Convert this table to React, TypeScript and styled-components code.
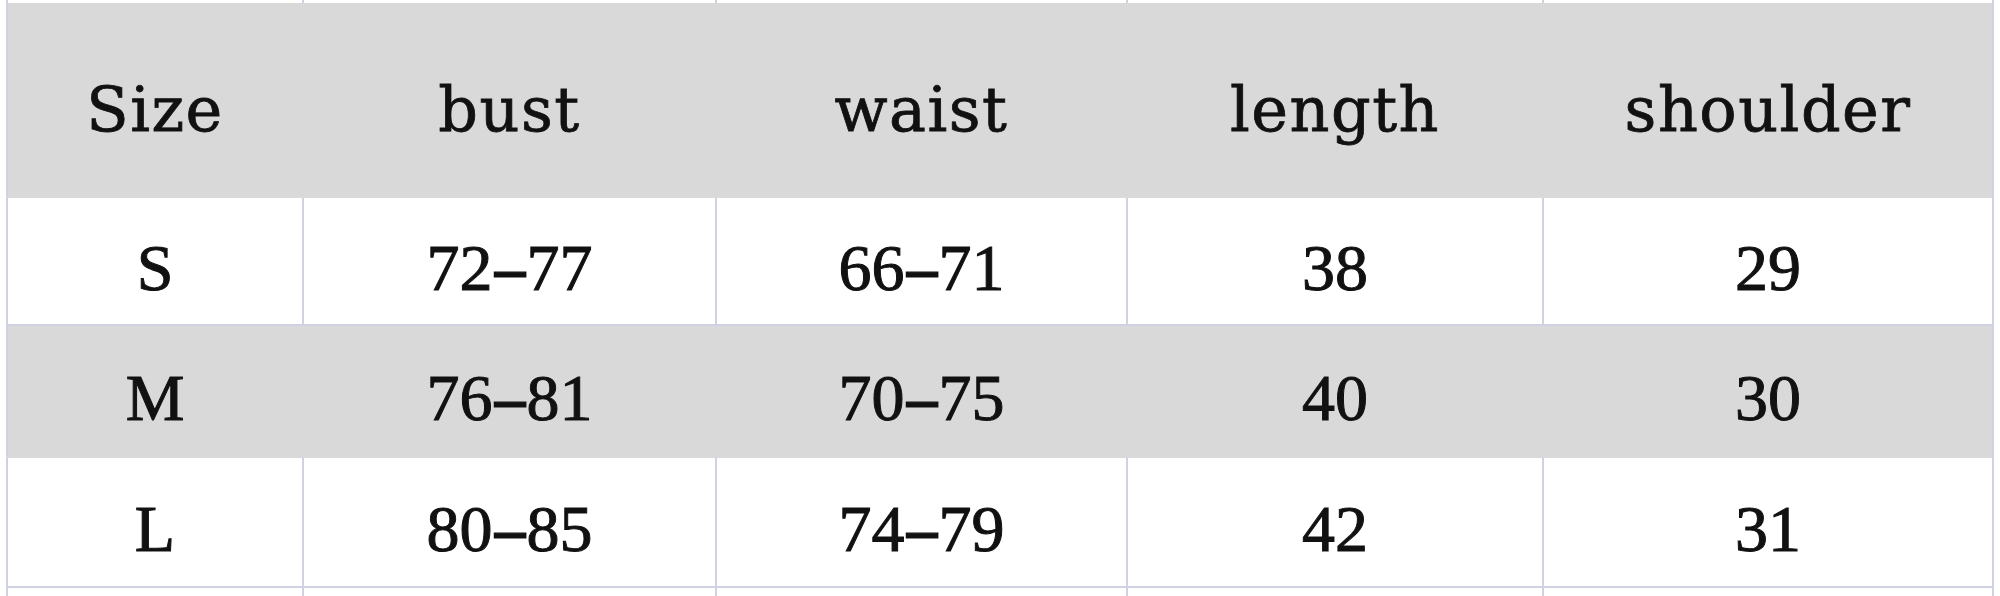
import styled, { createGlobalStyle } from 'styled-components';

const GlobalStyle = createGlobalStyle`
  html, body {
    margin: 0;
    padding: 0;
    background: #ffffff;
  }
`;

const LINE = '#cfd2e2';
const SHADE = '#d9d9d9';
const COLS = '296px 413px 411px 416px 450px';

type Size = { size: string; bust: string; waist: string; length: string; shoulder: string };

const sizes: Array<Size> = [
  { size: 'S', bust: '72-77', waist: '66-71', length: '38', shoulder: '29' },
  { size: 'M', bust: '76-81', waist: '70-75', length: '40', shoulder: '30' },
  { size: 'L', bust: '80-85', waist: '74-79', length: '42', shoulder: '31' },
];

const Sheet = styled.div`
  width: 2000px;
  height: 596px;
  overflow: hidden;
  padding-left: 6px;
  box-sizing: border-box;
  display: flex;
  flex-direction: column;
  color: #111111;
`;

const Row = styled.div<{ $height: number; $shaded?: boolean; $open?: boolean }>`
  display: grid;
  grid-template-columns: ${COLS};
  width: max-content;
  height: ${(p) => p.$height}px;
  box-sizing: border-box;
  background: ${(p) => (p.$shaded ? SHADE : 'transparent')};
  border-right: 2px solid ${LINE};
  border-bottom: ${(p) => (p.$open ? 'none' : `2px solid ${p.$shaded ? SHADE : LINE}`)};
`;

const Cell = styled.div<{ $shaded?: boolean; $head?: boolean }>`
  display: flex;
  align-items: center;
  justify-content: center;
  box-sizing: border-box;
  padding-top: ${(p) => (p.$head ? 20 : 14)}px;
  border-left: 2px solid ${(p) => (p.$shaded ? SHADE : LINE)};

  &:first-child {
    border-left-color: ${LINE};
  }
`;

const HeadText = styled.span`
  font-family: 'DejaVu Serif', 'Liberation Serif', serif;
  font-size: 62px;
  letter-spacing: 1.5px;
  line-height: 1;
  -webkit-text-stroke: 0.8px #111111;
`;

const ValueText = styled.span`
  font-family: 'Liberation Serif', 'Times New Roman', serif;
  font-size: 66px;
  line-height: 1;
  white-space: nowrap;
  -webkit-text-stroke: 1px #111111;
`;

const Dash = styled.span`
  display: inline-block;
  width: 34px;
  text-align: center;
  transform: scaleX(1.8);
`;

const Range = ({ value }: { value: string }) => {
  const [from, to] = value.split('-');
  if (to === undefined) return <ValueText>{value}</ValueText>;
  return (
    <ValueText>
      {from}
      <Dash>-</Dash>
      {to}
    </ValueText>
  );
};

const headers = ['Size', 'bust', 'waist', 'length', 'shoulder'];

export default function App() {
  return (
    <>
      <GlobalStyle />
      <Sheet>
        <Row $height={3} $open>
          {headers.map((h) => <Cell key={h} />)}
        </Row>
        <Row $height={195} $shaded>
          {headers.map((h) => (
            <Cell key={h} $shaded $head>
              <HeadText>{h}</HeadText>
            </Cell>
          ))}
        </Row>
        {sizes.map((s, i) => (
          <Row key={s.size} $height={i === 1 ? 132 : i === 0 ? 128 : 130} $shaded={i === 1}>
            <Cell $shaded={i === 1}><ValueText>{s.size}</ValueText></Cell>
            <Cell $shaded={i === 1}><Range value={s.bust} /></Cell>
            <Cell $shaded={i === 1}><Range value={s.waist} /></Cell>
            <Cell $shaded={i === 1}><Range value={s.length} /></Cell>
            <Cell $shaded={i === 1}><Range value={s.shoulder} /></Cell>
          </Row>
        ))}
        <Row $height={8} $open>
          {headers.map((h) => <Cell key={h} />)}
        </Row>
      </Sheet>
    </>
  );
}
